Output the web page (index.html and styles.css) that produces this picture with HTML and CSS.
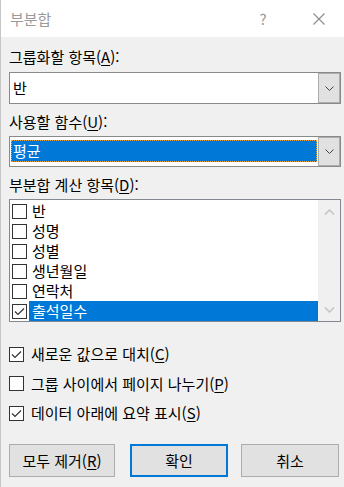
FILE: index.html
```html
<!DOCTYPE html>
<html lang="ko">
<head>
  <meta charset="utf-8" />
  <title>부분합</title>
  <link rel="stylesheet" href="styles.css">
</head>
<body>
  <header class="titlebar">
    <span class="title">부분합</span>
    <span class="help">?</span>
    <svg class="close" width="12" height="12" viewBox="0 0 12 12">
      <path d="M0.5 0.5 L11.5 11.5 M11.5 0.5 L0.5 11.5" stroke="#8c8c8c" stroke-width="1.1" fill="none" />
    </svg>
  </header>

  <main class="content">
    <p class="field-label first">그룹화할 항목(<u>A</u>):</p>
    <div class="combo">
      <div class="combo-field">반</div>
      <div class="combo-btn">
        <svg width="9" height="5" viewBox="0 0 9 5"><polyline points="0.5,0.5 4.5,4.5 8.5,0.5" stroke="#444" fill="none" /></svg>
      </div>
    </div>

    <p class="field-label">사용할 함수(<u>U</u>):</p>
    <div class="combo combo-focus">
      <div class="combo-field"><span class="combo-selected">평균</span></div>
      <div class="combo-btn">
        <svg width="9" height="5" viewBox="0 0 9 5"><polyline points="0.5,0.5 4.5,4.5 8.5,0.5" stroke="#444" fill="none" /></svg>
      </div>
    </div>

    <p class="field-label">부분합 계산 항목(<u>D</u>):</p>
    <div class="listbox">
      <ul class="list-items">
        <li><span class="box"></span><span class="item-text">반</span></li>
        <li><span class="box"></span><span class="item-text">성명</span></li>
        <li><span class="box"></span><span class="item-text">성별</span></li>
        <li><span class="box"></span><span class="item-text">생년월일</span></li>
        <li><span class="box"></span><span class="item-text">연락처</span></li>
        <li class="selected">
          <span class="box"><svg width="13" height="13" viewBox="0 0 13 13"><polyline points="2,6.5 5,9.5 11,3.5" stroke="#333" stroke-width="1.2" fill="none" /></svg></span>
          <span class="item-text">출석일수</span>
        </li>
      </ul>
      <div class="scrollbar">
        <svg width="11" height="6" viewBox="0 0 11 6"><polyline points="1,5.5 5.5,1 10,5.5" stroke="#c4c4c4" stroke-width="1.6" fill="none" /></svg>
        <svg width="11" height="6" viewBox="0 0 11 6"><polyline points="1,0.5 5.5,5 10,0.5" stroke="#c4c4c4" stroke-width="1.6" fill="none" /></svg>
      </div>
    </div>

    <div class="option first">
      <span class="box"><svg width="13" height="13" viewBox="0 0 13 13"><polyline points="2,6.5 5,9.5 11,3.5" stroke="#333" stroke-width="1.2" fill="none" /></svg></span>
      <span>새로운 값으로 대치(<u>C</u>)</span>
    </div>
    <div class="option">
      <span class="box"></span>
      <span>그룹 사이에서 페이지 나누기(<u>P</u>)</span>
    </div>
    <div class="option">
      <span class="box"><svg width="13" height="13" viewBox="0 0 13 13"><polyline points="2,6.5 5,9.5 11,3.5" stroke="#333" stroke-width="1.2" fill="none" /></svg></span>
      <span>데이터 아래에 요약 표시(<u>S</u>)</span>
    </div>

    <div class="buttons">
      <button class="btn btn-wide">모두 제거(<u>R</u>)</button>
      <button class="btn btn-primary">확인</button>
      <button class="btn btn-last">취소</button>
    </div>
  </main>
</body>
</html>
```

FILE: styles.css
```css
*, *::before, *::after {
  box-sizing: border-box;
  margin: 0;
  padding: 0;
}

body {
  font-family: "Noto Sans CJK KR", "Noto Sans", sans-serif;
  font-size: 15px;
  line-height: 20px;
  color: #000;
  background: #f0f0f0;
  border-left: 1px solid #c6c6c6;
  height: 487px;
  overflow: hidden;
}

u {
  text-underline-offset: 2px;
}

/* Title bar */
.titlebar {
  height: 37px;
  background: #fff;
  display: flex;
  align-items: center;
  padding-left: 9px;
  color: #9a9a9a;
}

.titlebar .title {
  flex: 1;
}

.help {
  width: 8px;
  text-align: center;
}

.close {
  margin-left: 46px;
  margin-right: 19px;
}

/* Content */
.content {
  padding: 0 3px 0 8px;
}

.field-label {
  margin-top: 8px;
  margin-bottom: 4px;
}

.field-label.first {
  margin-top: 10px;
  margin-bottom: 5px;
}

.combo {
  display: flex;
  height: 32px;
  border: 1px solid #8a8a8a;
  background: #fff;
}

.combo-focus {
  height: 31px;
}

.combo-field {
  flex: 1;
  padding-left: 3px;
  display: flex;
  align-items: center;
}

.combo-focus .combo-field {
  padding: 3px 1px 4px 1px;
  align-items: stretch;
}

.combo-selected {
  flex: 1;
  background: #0078d7;
  color: #fff;
  border: 1px dotted #e9a440;
  padding-left: 1px;
  line-height: 19px;
}

.combo-btn {
  width: 22px;
  background: #e1e1e1;
  border: 1px solid #adadad;
  display: flex;
  align-items: center;
  justify-content: center;
}

/* List box */
.listbox {
  display: flex;
  height: 123px;
  border: 1px solid #828790;
  background: #fff;
}

.list-items {
  flex: 1;
  list-style: none;
  padding: 1px 0 0 2px;
}

.list-items li {
  display: flex;
  align-items: center;
  height: 20px;
}

.box {
  width: 15px;
  height: 15px;
  border: 1px solid #333;
  background: #fff;
  flex-shrink: 0;
  display: flex;
}

.item-text {
  flex: 1;
  margin-left: 2px;
  padding-left: 3px;
  height: 20px;
}

.selected .item-text {
  background: #0078d7;
  color: #fff;
}

.scrollbar {
  width: 22px;
  background: #f0f0f0;
  display: flex;
  flex-direction: column;
  justify-content: space-between;
  align-items: center;
  padding: 9px 0 8px;
}

/* Options */
.option {
  display: flex;
  align-items: center;
  gap: 7px;
  height: 20px;
  margin-top: 9.5px;
}

.option.first {
  margin-top: 22px;
}

/* Buttons */
.buttons {
  display: flex;
  margin-top: 21px;
}

.btn {
  font: inherit;
  color: #000;
  height: 33px;
  width: 98px;
  background: #e1e1e1;
  border: 1px solid #adadad;
}

.btn-wide {
  width: 106px;
}

.btn-primary {
  border: 2px solid #0078d7;
  margin-left: 15px;
}

.btn-last {
  margin-left: 13px;
}
```
